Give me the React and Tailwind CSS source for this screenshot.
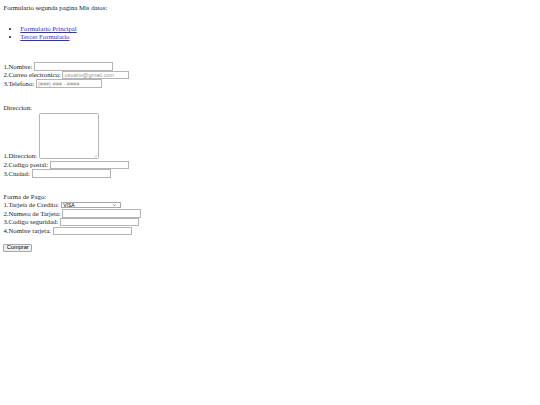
const inputBase =
  "box-border h-[8.4px] border-[0.8px] border-[#b4b4b4] bg-white px-[1px] font-['Liberation_Sans',Arial,sans-serif] text-[5.6px] leading-none text-black outline-none placeholder:text-[#999]";

function Field({ label, width = 'w-[79px]', placeholder, type = 'text' }) {
  return (
    <div className="flex h-[8.6px] items-center gap-[1.7px]">
      <span className="whitespace-nowrap">{label}</span>
      <input type={type} placeholder={placeholder} className={`${inputBase} ${width}`} />
    </div>
  );
}

export default function App() {
  return (
    <div className="min-h-screen bg-white px-[3.4px] pt-[3.8px] font-['Liberation_Serif','Times_New_Roman',serif] text-[6.75px] leading-[7.76px] text-[#1a1a1a]">
      <p>Formulario segunda pagina Mis datos:</p>

      <ul className="mt-[13.7px] list-disc pl-[16.9px]">
        <li>
          <a href="#" className="text-[#2b2bef] underline">Formulario Principal</a>
        </li>
        <li>
          <a href="#" className="text-[#2b2bef] underline">Tercer Formulario</a>
        </li>
      </ul>

      <form className="mt-[21.4px]" onSubmit={(e) => e.preventDefault()}>
        <Field label="1.Nombre:" />
        <Field label="2.Correo electronico:" width="w-[66.5px]" type="email" placeholder="usuario@gmail.com" />
        <Field label="3.Telefono:" width="w-[66.5px]" type="tel" placeholder="(###) ### - ####" />

        <p className="mt-[16.5px]">Direccion:</p>
        <div className="mt-[0.9px] flex items-end gap-[1.7px]">
          <span className="whitespace-nowrap leading-[6.4px]">1.Direccion:</span>
          <div className="relative">
            <textarea className="box-border block h-[46px] w-[60px] resize-none rounded-[1.5px] border-[0.8px] border-[#b4b4b4] bg-white outline-none" />
            <svg viewBox="0 0 6 6" className="pointer-events-none absolute bottom-[1.2px] right-[1.2px] h-[3.5px] w-[3.5px]">
              <path d="M5.5 1 L1 5.5 M5.5 3.5 L3.5 5.5" stroke="#999" strokeWidth="0.9" />
            </svg>
          </div>
        </div>
        <div className="mt-[1.4px]">
          <Field label="2.Codigo postal:" />
          <Field label="3.Ciudad:" />
        </div>

        <p className="mt-[15.3px]">Forma de Pago:</p>
        <div className="flex h-[8.6px] items-center gap-[1.7px]">
          <span className="whitespace-nowrap">1.Tarjeta de Credito:</span>
          <div className="box-border flex h-[6.4px] w-[60.7px] items-center justify-between rounded-[0.5px] border-[0.6px] border-[#a8a8a8] bg-white pl-[1.5px] pr-[4px] font-['Liberation_Sans',Arial,sans-serif] text-[5px] leading-none text-black">
            <span>VISA</span>
            <svg viewBox="0 0 8 5" className="h-[2.2px] w-[3.4px]">
              <path d="M1 1 L4 4 L7 1" fill="none" stroke="#333" strokeWidth="1.4" />
            </svg>
          </div>
        </div>
        <Field label="2.Numero de Tarjeta:" />
        <Field label="3.Codigo seguridad:" />
        <Field label="4.Nombre tarjeta:" />

        <button
          type="submit"
          className="mt-[8.5px] box-border h-[8.4px] w-[28.7px] rounded-[1px] border-[0.8px] border-[#a8a8a8] bg-[#efefef] font-['Liberation_Sans',Arial,sans-serif] text-[5.6px] leading-none text-black"
        >
          Comprar
        </button>
      </form>
    </div>
  );
}
